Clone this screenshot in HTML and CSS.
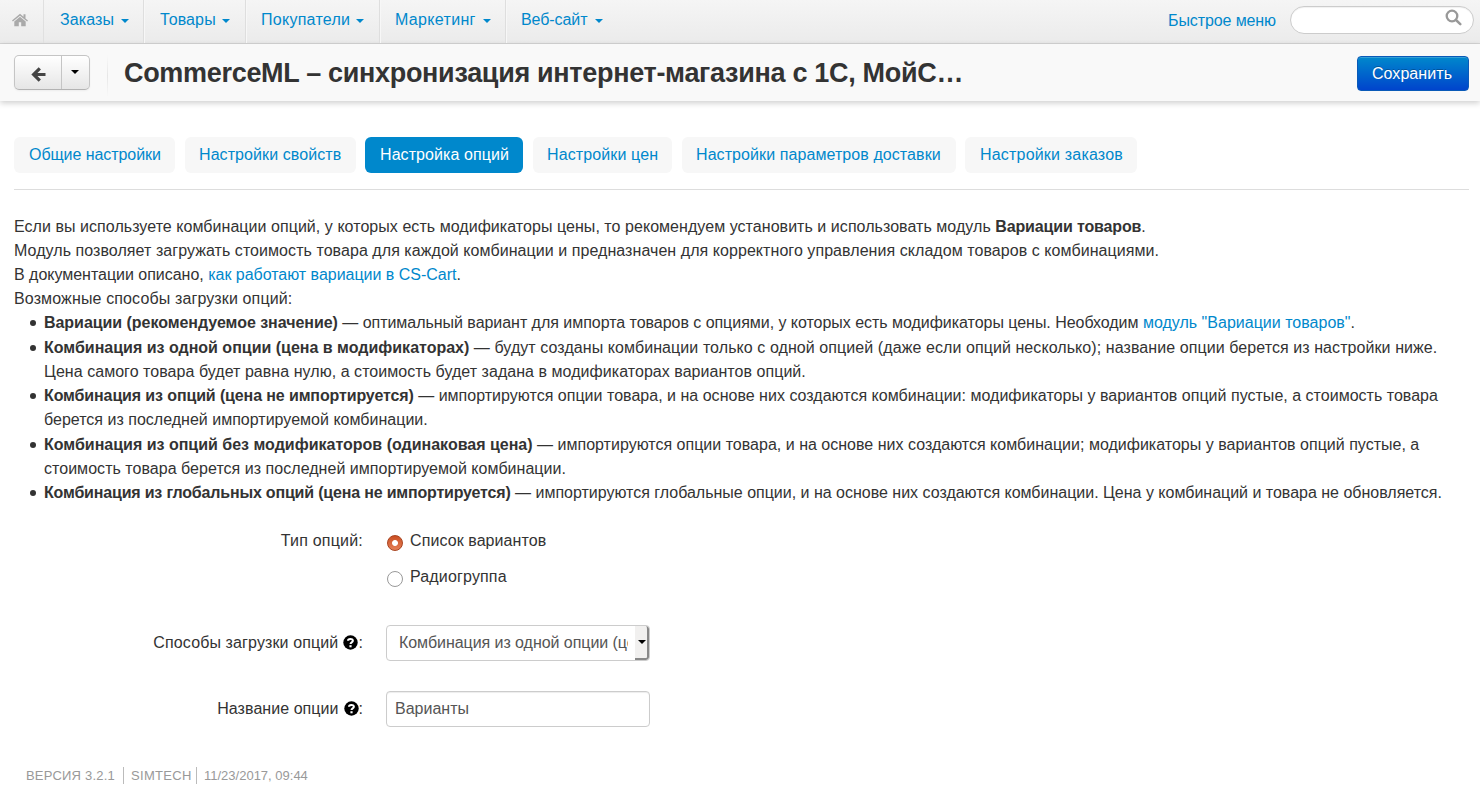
FILE: index.html
```html
<!DOCTYPE html>
<html lang="ru">
<head>
<meta charset="utf-8">
<title>CommerceML</title>
<link rel="stylesheet" href="styles.css">
</head>
<body>
<header class="navbar">
  <a class="home"><svg width="16" height="14" viewBox="0 0 16 14"><path fill="#aaa" d="M8 .8 0 7.400l.9 1.100L8 2.800l7.100 5.700.9-1.100-2.500-2V1.200h-2v2.500zM8 3.800 2.300 8.400V13.200h4.500V9.200h2.400v4h4.500V8.400z"/></svg></a>
  <nav class="menu">
    <a class="menu-item orders"><span class="label">Заказы</span><i class="caret"></i></a>
    <a class="menu-item products"><span class="label">Товары</span><i class="caret"></i></a>
    <a class="menu-item customers"><span class="label">Покупатели</span><i class="caret"></i></a>
    <a class="menu-item marketing"><span class="label">Маркетинг</span><i class="caret"></i></a>
    <a class="menu-item website"><span class="label">Веб-сайт</span><i class="caret"></i></a>
  </nav>
  <a class="quick">Быстрое меню</a>
  <div class="search"><svg width="17" height="17" viewBox="0 0 17 17" fill="none" stroke="#999"><circle cx="7" cy="7" r="5.300" stroke-width="2.300"/><path d="m11 11 4.300 4.100" stroke-width="2.500" stroke-linecap="round"/></svg></div>
</header>
<section class="actions">
  <div class="btn-group">
    <a class="btn back"><svg width="15" height="15" viewBox="0 0 15 15" fill="none" stroke="#444" stroke-width="3.200"><path d="M8.800 1.300 2.600 7.500l6.200 6.200M2.800 7.500H14.500"/></svg></a>
    <a class="btn drop"><i class="caret dark"></i></a>
  </div>
  <div class="divider"></div>
  <h1 class="title">CommerceML – синхронизация интернет-магазина с 1С, МойС…</h1>
  <a class="save">Сохранить</a>
</section>
<main class="content">
  <nav class="tabs">
    <a class="tab t1">Общие настройки</a>
    <a class="tab t2">Настройки свойств</a>
    <a class="tab t3 active">Настройка опций</a>
    <a class="tab t4">Настройки цен</a>
    <a class="tab t5">Настройки параметров доставки</a>
    <a class="tab t6">Настройки заказов</a>
  </nav>
  <div class="text">
    <div class="l1">Если вы используете комбинации опций, у которых есть модификаторы цены, то рекомендуем установить и использовать модуль <b>Вариации товаров</b>.</div>
    <div class="l2">Модуль позволяет загружать стоимость товара для каждой комбинации и предназначен для корректного управления складом товаров с комбинациями.</div>
    <div class="l3">В документации описано, <a>как работают вариации в CS-Cart</a>.</div>
    <div class="l4">Возможные способы загрузки опций:</div>
    <ul class="list">
      <li><div class="l5"><b>Вариации (рекомендуемое значение)</b> — оптимальный вариант для импорта товаров с опциями, у которых есть модификаторы цены. Необходим <a>модуль "Вариации товаров"</a>.</div></li>
      <li><div class="l6"><b>Комбинация из одной опции (цена в модификаторах)</b> — будут созданы комбинации только с одной опцией (даже если опций несколько); название опции берется из настройки ниже.</div><div class="l7">Цена самого товара будет равна нулю, а стоимость будет задана в модификаторах вариантов опций.</div></li>
      <li><div class="l8"><b>Комбинация из опций (цена не импортируется)</b> — импортируются опции товара, и на основе них создаются комбинации: модификаторы у вариантов опций пустые, а стоимость товара</div><div class="l9">берется из последней импортируемой комбинации.</div></li>
      <li><div class="l10"><b>Комбинация из опций без модификаторов (одинаковая цена)</b> — импортируются опции товара, и на основе них создаются комбинации; модификаторы у вариантов опций пустые, а</div><div class="l11">стоимость товара берется из последней импортируемой комбинации.</div></li>
      <li><div class="l12"><b>Комбинация из глобальных опций (цена не импортируется)</b> — импортируются глобальные опции, и на основе них создаются комбинации. Цена у комбинаций и товара не обновляется.</div></li>
    </ul>
  </div>
  <form class="form">
    <div class="row radios">
      <div class="name n1">Тип опций:</div>
      <div class="options">
        <label class="option o1"><i class="radio checked"></i><span>Список вариантов</span></label>
        <label class="option o2"><i class="radio"></i><span>Радиогруппа</span></label>
      </div>
    </div>
    <div class="row">
      <div class="name n2"><span>Способы загрузки опций</span><svg class="help" width="15" height="15" viewBox="0 0 15 15"><circle cx="7.500" cy="7.500" r="7.200"/><path d="M5 5.800C5 3.500 9.900 3.300 9.900 5.800c0 1.700-2.400 1.600-2.400 3.300" fill="none" stroke="#fff" stroke-width="2"/><path d="M6.400 10.200h2.200v2.100H6.400z" fill="#fff"/></svg><span>:</span></div>
      <div class="select"><span class="value">Комбинация из одной опции (це</span><span class="arrow"><i class="caret dark"></i></span></div>
    </div>
    <div class="row">
      <div class="name n3"><span>Название опции</span><svg class="help" width="15" height="15" viewBox="0 0 15 15"><circle cx="7.500" cy="7.500" r="7.200"/><path d="M5 5.800C5 3.500 9.900 3.300 9.900 5.800c0 1.700-2.400 1.600-2.400 3.300" fill="none" stroke="#fff" stroke-width="2"/><path d="M6.400 10.200h2.200v2.100H6.400z" fill="#fff"/></svg><span>:</span></div>
      <div class="input">Варианты</div>
    </div>
  </form>
  <footer class="footer"><span class="f1">ВЕРСИЯ 3.2.1</span><span class="f2">SIMTECH</span><span class="f3">11/23/2017, 09:44</span></footer>
</main>
</body>
</html>
```
FILE: styles.css
```css
* { box-sizing: border-box; }
body { margin: 0; height: 800px; overflow: hidden; background: #fff; color: #333; font: 16px/24px "Liberation Sans", Arial, sans-serif; letter-spacing: 0.08px; white-space: nowrap; }
a { color: #08c; text-decoration: none; }
svg { display: block; flex: none; }
.navbar { height: 44px; display: flex; align-items: stretch; background: linear-gradient(#f5f5f5, #ebebeb); border-bottom: 1px solid #d5d5d5; }
.home { width: 44px; padding: 13px 0 0 12px; border-right: 1px solid #e0e0e0; }
.menu { display: flex; flex: 1; }
.menu-item { display: flex; justify-content: space-between; padding: 8px 14px 0 16px; border-right: 1px solid #dedede; box-shadow: 1px 0 #f7f7f7; letter-spacing: 0.12px; }
.menu-item:last-child { border: 0; box-shadow: none; }
.orders { width: 100px; }
.products { width: 102px; padding-right: 15px; }
.customers { width: 134px; padding-left: 15px; letter-spacing: 0.27px; padding-right: 15px; }
.marketing { width: 126px; padding-left: 15px; letter-spacing: 0.33px; }
.website { width: 112px; padding-left: 15px; letter-spacing: -0.07px; padding-right: 15px; }
.caret { flex: none; width: 0; height: 0; margin-top: 11px; border: 4px solid transparent; border-top-color: #08c; border-bottom: 0; }
.caret.dark { margin: 0; border-top-color: #000; }
.quick { padding: 9px 14px 0 0; letter-spacing: -0.1px; }
.search { width: 184px; height: 28px; margin: 6px 6px 0 0; padding: 2px 0 0 154px; background: #fff; border: 1px solid #ccc; border-radius: 14px; box-shadow: inset 0 1px 1px rgba(0,0,0,.06); }
.actions { height: 57px; display: flex; align-items: flex-start; padding: 11px 11px 0 14px; background: #f9f9f9; box-shadow: 0 2px 6px rgba(0,0,0,.2); }
.btn-group { display: flex; width: 76px; height: 35px; border: 1px solid #c5c5c5; border-bottom-color: #b3b3b3; border-radius: 5px; background: linear-gradient(#fff, #e6e6e6); box-shadow: 0 1px 2px rgba(0,0,0,.05); }
.btn { display: flex; align-items: center; justify-content: center; }
.back { width: 47px; padding-top: 4px; border-right: 1px solid #c5c5c5; }
.drop { flex: 1; padding: 0 2px 1px 0; }
.divider { width: 1px; height: 42px; margin-left: 17px; background: linear-gradient(#f9f9f9, #e6e6e6 50%, #f9f9f9); }
.title { margin: 0; padding-left: 16px; flex: 1; font-size: 27px; line-height: 36px; letter-spacing: -0.31px; }
.save { width: 112px; height: 35px; margin-top: 1px; padding-right: 2px; border: 1px solid #0a5ab8; border-radius: 4px; background: linear-gradient(#08c, #04c); box-shadow: inset 0 1px rgba(255,255,255,.2); color: #fff; text-align: center; line-height: 33px; text-shadow: 0 -1px rgba(0,0,0,.25); }
.content { padding: 36px 11px 0 14px; }
.tabs { display: flex; gap: 10px; height: 53px; border-bottom: 1px solid #ddd; }
.tab { height: 36px; padding-left: 15px; line-height: 36px; background: #f7f7f7; border-radius: 6px; }
.tab.active { background: #08c; color: #fff; }
.t1 { width: 161px; letter-spacing: -0.06px; }
.t2 { width: 171px; padding-left: 14px; }
.t3 { width: 158px; margin-left: -1px; }
.t4 { width: 139px; padding-left: 14px; letter-spacing: 0.12px; }
.t5 { width: 274px; padding-left: 14px; }
.t6 { width: 172px; margin-left: -1px; letter-spacing: 0.19px; }
.text { margin-top: 25px; }
.l1 { letter-spacing: 0.048px; } .l1 b { letter-spacing: -0.14px; }
.l2 { letter-spacing: 0.06px; }
.l3 { letter-spacing: -0.02px; }
.l4 { letter-spacing: 0.13px; }
.l5 { letter-spacing: -0.035px; } .l5 b { letter-spacing: -0.04px; } .l5 a { letter-spacing: 0.01px; }
.l6 { letter-spacing: 0.077px; } .l6 b { letter-spacing: 0; }
.l7 { letter-spacing: 0.045px; }
.l8 { letter-spacing: 0.017px; } .l8 b { letter-spacing: -0.12px; }
.l9 { letter-spacing: 0.01px; }
.l10 { letter-spacing: 0.01px; } .l10 b { letter-spacing: 0; }
.l11 { letter-spacing: 0.035px; }
.l12 { letter-spacing: -0.008px; } .l12 b { letter-spacing: -0.18px; }
.list { margin: 0; padding: 0.22px 0 0; list-style: none; }
.list li { position: relative; padding-left: 30px; line-height: 24.3px; }
.list li::before { content: ""; position: absolute; left: 16px; top: 9px; width: 6px; height: 6px; border-radius: 50%; background: #333; }
.form { margin-top: 18.400px; }
.row { display: flex; height: 36px; margin-bottom: 30px; }
.row.radios { height: 76px; margin-bottom: 25px; }
.name { width: 349px; display: flex; justify-content: flex-end; padding-top: 6px; margin-right: 23px; }
.n1 { padding-top: 5px; letter-spacing: 0.2px; }
.n2 { letter-spacing: 0.12px; }
.n3 { letter-spacing: 0.05px; }
.help { margin: 4px 0 0 5px; }
.option { display: flex; height: 36px; padding-top: 5px; align-items: flex-start; }
.o2 { letter-spacing: 0.16px; }
.radio { width: 16px; height: 16px; margin: 6px 7px 0 1px; border: 1px solid #999; border-radius: 50%; background: #fff; }
.radio.checked { border-color: #a8431f; background: radial-gradient(circle, #fff 0 2.500px, transparent 3.400px), linear-gradient(#cb4e22, #e58057); }
.select, .input { width: 264px; height: 36px; border: 1px solid #ccc; border-radius: 4px; color: #555; line-height: 34px; }
.input { padding-left: 8px; letter-spacing: 0; box-shadow: inset 0 1px 1px rgba(0,0,0,.075); }
.select { display: flex; padding-left: 12px; overflow: hidden; }
.value { width: 229px; overflow: hidden; letter-spacing: -0.05px; }
.arrow { margin-left: auto; width: 14px; display: flex; align-items: center; justify-content: center; background: #f1f0ef; border-right: 2px solid #888; border-bottom: 2px solid #888; border-radius: 0 3px 3px 0; }
.arrow .caret { margin-left: 1px; }
.footer { display: flex; margin-top: 40px; padding-left: 12px; color: #999; font-size: 13px; line-height: 17px; letter-spacing: 0; }
.f1 { width: 98px; border-right: 1px solid #bbb; letter-spacing: 0.2px; }
.f2 { width: 73px; padding-left: 7px; border-right: 1px solid #bbb; letter-spacing: 0.3px; }
.f3 { padding-left: 7px; }
```
